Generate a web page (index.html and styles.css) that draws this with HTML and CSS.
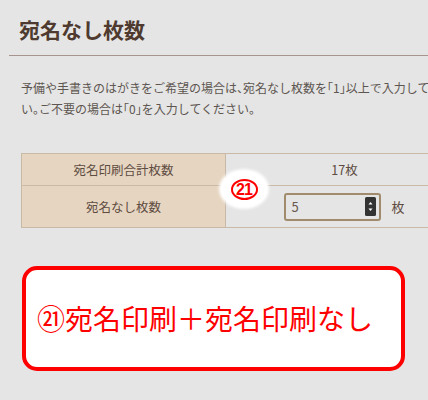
FILE: index.html
```html
<!DOCTYPE html>
<html lang="ja">
<head>
  <meta charset="utf-8">
  <title>宛名なし枚数</title>
  <link rel="stylesheet" href="styles.css">
</head>
<body>

  <div class="page">
    <div class="head">
      <h2 class="title">宛名なし枚数</h2>
    </div>

    <div class="content">
      <p class="note">予備や手書きのはがきをご希望の場合は<span class="hw">、</span>宛名なし枚数を<span class="hw">「</span>1<span class="hw">」</span>以上で入力してください<span class="hw">。</span>ご不要の場合は<span class="hw">「</span>0<span class="hw">」</span>を入力してください<span class="hw">。</span></p>

      <div class="table-wrap">
        <table class="count-table">
          <tr class="row-total">
            <th>宛名印刷合計枚数</th>
            <td>17枚</td>
          </tr>
          <tr class="row-blank">
            <th>宛名なし枚数</th>
            <td>
              <span class="num-box">
                <span class="num-val">5</span>
                <span class="spin">
                  <svg width="11" height="19" viewBox="0 0 11 19">
                    <rect width="11" height="19" rx="1.5" fill="#333"/>
                    <path d="M3.5 7.5 L5.5 5 L7.5 7.5 Z" fill="#fff"/>
                    <path d="M3.5 11.5 L5.5 14 L7.5 11.5 Z" fill="#fff"/>
                  </svg>
                </span>
              </span>
              <span class="unit">枚</span>
            </td>
          </tr>
        </table>

        <!-- annotation marker -->
        <span class="marker"><span class="marker-num">21</span></span>
      </div>

      <div class="callout">㉑宛名印刷＋宛名印刷なし</div>
    </div>
  </div>

</body>
</html>
```

FILE: styles.css
```css
html, body {
  margin: 0;
  padding: 0;
}

body {
  background-color: #e5e5e5;
  font-family: "Noto Sans CJK JP", "Noto Sans", sans-serif;
  overflow: hidden;
}

.page {
  width: 480px;
}

.head {
  margin-left: 9px;
  padding: 13px 0 10px 10px;
  border-bottom: 1px solid #a79690;
}

.title {
  margin: 0;
  font-size: 21px;
  line-height: 32px;
  font-weight: bold;
  color: #4f3a2f;
}

.content {
  padding: 0 0 0 21px;
}

.note {
  width: 456px;
  margin: 21px 0 0;
  font-size: 12px;
  line-height: 21px;
  color: #5d5550;
}

.note .hw {
  font-feature-settings: "halt";
}

.table-wrap {
  position: relative;
  width: 442px;
  margin-top: 34px;
}

.count-table {
  width: 442px;
  border-collapse: collapse;
  font-size: 12.5px;
  color: #5e4c42;
}

.count-table th,
.count-table td {
  border: 1px solid #c9b9a7;
  text-align: center;
  padding: 0;
}

.count-table th {
  width: 203px;
  background-color: #e6d5c1;
  font-weight: normal;
}

.row-total th,
.row-total td {
  height: 31px;
}

.row-blank th,
.row-blank td {
  height: 41px;
}

.count-table td {
  padding-left: 1px;
}

.row-blank td {
  font-size: 0;
}

.num-box {
  display: inline-flex;
  align-items: center;
  justify-content: space-between;
  box-sizing: border-box;
  width: 97px;
  height: 28px;
  padding: 0 3px 0 5px;
  border: 2px solid #a08b6c;
  border-radius: 3px;
  vertical-align: middle;
  font-size: 13px;
  color: #6a5a4f;
}

.spin {
  display: flex;
}

.unit {
  display: inline-block;
  margin-left: 10px;
  vertical-align: middle;
  font-size: 13px;
  color: #5e4c42;
}

.marker {
  position: absolute;
  left: 200px;
  top: 18px;
  width: 46px;
  height: 36px;
  border-radius: 50%;
  background: #fff;
  box-shadow: 0 0 3px 2px #fff;
  display: flex;
  align-items: center;
  justify-content: center;
}

.marker-num {
  box-sizing: border-box;
  width: 27px;
  height: 21px;
  border: 2px solid #f00;
  border-radius: 50%;
  color: #f00;
  font-family: "Liberation Sans", sans-serif;
  font-weight: bold;
  font-size: 16px;
  line-height: 17px;
  text-align: center;
  letter-spacing: -1px;
}

.callout {
  box-sizing: border-box;
  width: 383px;
  height: 105px;
  margin-top: 38px;
  margin-left: 1px;
  padding-left: 11px;
  border: 4px solid #f00;
  border-radius: 15px;
  background: #fff;
  color: #f00;
  font-size: 28px;
  line-height: 97px;
  white-space: nowrap;
}
```
